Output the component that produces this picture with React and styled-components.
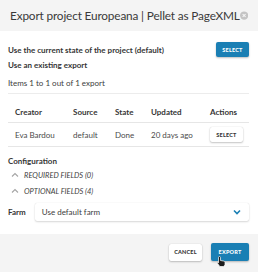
import React from 'react';
import styled, { createGlobalStyle } from 'styled-components';

const GlobalStyle = createGlobalStyle`
  html, body {
    margin: 0;
    padding: 0;
    background: #ffffff;
  }
  body {
    font-family: Lato, "Open Sans", sans-serif;
    color: #363636;
  }
`;

const Modal = styled.div`
  width: 258px;
  height: 272px;
  display: flex;
  flex-direction: column;
  background: #fff;
  overflow: hidden;
  position: relative;
`;

const Header = styled.header`
  height: 31px;
  flex: none;
  display: flex;
  align-items: center;
  justify-content: space-between;
  padding: 0 10px 0 10px;
  background: #f4f4f4;
  box-sizing: border-box;
`;

const Title = styled.h1`
  margin: 0;
  font-size: 11.8px;
  font-weight: 400;
  color: #3a3a3a;
  white-space: nowrap;
  letter-spacing: -0.15px;
`;

const Body = styled.section`
  flex: 1;
  padding: 0 9px 0 8px;
  display: flex;
  flex-direction: column;
`;

const OptionRow = styled.div`
  display: flex;
  align-items: center;
  justify-content: space-between;
  height: ${({ h }) => h}px;
  margin-top: ${({ mt }) => mt || 0}px;
`;

const Strong = styled.span`
  font-size: 8px;
  font-weight: 700;
  color: #363636;
`;

const Text = styled.span`
  font-size: 8px;
  color: #3d3d3d;
`;

const Button = styled.button`
  font-family: Lato, "Open Sans", sans-serif;
  font-size: 5.5px;
  font-weight: 900;
  letter-spacing: 0.2px;
  text-transform: uppercase;
  border: none;
  border-radius: 2px;
  padding: 0;
  width: ${({ w }) => w}px;
  height: ${({ h }) => h || 15}px;
  cursor: pointer;
  color: ${({ primary }) => (primary ? '#ffffff' : '#363636')};
  background: ${({ primary }) => (primary ? '#1a7fb4' : '#ffffff')};
  box-shadow: ${({ primary }) =>
    primary ? '0 1px 2px rgba(0,0,0,0.25)' : '0 1px 2px rgba(0,0,0,0.22), 0 0 1px rgba(0,0,0,0.2)'};
`;

const Divider = styled.div`
  height: 1px;
  background: #ececec;
`;

const Table = styled.table`
  width: 100%;
  border-collapse: collapse;
  margin-top: 7px;
  font-size: 8px;

  th {
    text-align: left;
    font-weight: 700;
    height: 21px;
    border-bottom: 1px solid #e6e6e6;
    padding: 0;
    color: #363636;
  }

  td {
    height: 23px;
    border-bottom: 1px solid #e6e6e6;
    padding: 0;
    color: #4a4a4a;
  }

  th:first-child,
  td:first-child {
    padding-left: 7px;
  }
`;

const Section = styled.div`
  margin-top: 8px;
  display: flex;
  flex-direction: column;
`;

const Toggle = styled.div`
  display: flex;
  align-items: center;
  gap: 5px;
  height: 16px;
  padding-left: 3px;
  font-size: 7.5px;
  font-style: italic;
  text-transform: uppercase;
  color: #3d3d3d;
`;

const FarmRow = styled.div`
  display: flex;
  align-items: center;
  gap: 9px;
  margin-top: 4px;
`;

const Select = styled.div`
  flex: 1;
  height: 18px;
  display: flex;
  align-items: center;
  justify-content: space-between;
  padding: 0 8px 0 7px;
  font-size: 8px;
  color: #3d3d3d;
  border-radius: 2px;
  box-shadow: 0 1px 2px rgba(0,0,0,0.15), 0 0 1px rgba(0,0,0,0.15);
`;

const Footer = styled.footer`
  height: 38px;
  flex: none;
  display: flex;
  align-items: center;
  justify-content: flex-end;
  gap: 9px;
  padding: 0 9px 2px;
  background: #f4f4f4;
  box-sizing: border-box;
`;

const Cursor = styled.svg`
  position: absolute;
  left: 217px;
  top: 256px;
`;

const CloseIcon = () => (
  <svg width="9" height="9" viewBox="0 0 10 10">
    <circle cx="5" cy="5" r="5" fill="#c4c4c4" />
    <path d="M3.2 3.2 L6.8 6.8 M6.8 3.2 L3.2 6.8" stroke="#f4f4f4" strokeWidth="1.3" />
  </svg>
);

const ChevronUp = () => (
  <svg width="8" height="6" viewBox="0 0 8 6">
    <path d="M1 4.5 L4 1.5 L7 4.5" fill="none" stroke="#a5a5a5" strokeWidth="1.1" />
  </svg>
);

const ChevronDown = () => (
  <svg width="8" height="6" viewBox="0 0 8 6">
    <path d="M1 1.5 L4 4.5 L7 1.5" fill="none" stroke="#1a7fb4" strokeWidth="1.6" />
  </svg>
);

const rows = [{ creator: 'Eva Bardou', source: 'default', state: 'Done', updated: '20 days ago' }];

export default function App() {
  return (
    <>
      <GlobalStyle />
      <Modal>
        <Header>
          <Title>Export project Europeana | Pellet as PageXML</Title>
          <CloseIcon />
        </Header>
        <Body>
          <OptionRow h={15} mt={11}>
            <Strong>Use the current state of the project (default)</Strong>
            <Button primary w={33}>Select</Button>
          </OptionRow>
          <OptionRow h={16}>
            <Strong>Use an existing export</Strong>
          </OptionRow>
          <OptionRow h={20}>
            <Text>Items 1 to 1 out of 1 export</Text>
          </OptionRow>
          <Divider />
          <Table>
            <thead>
              <tr>
                <th style={{ width: 58 }}>Creator</th>
                <th style={{ width: 42 }}>Source</th>
                <th style={{ width: 36 }}>State</th>
                <th style={{ width: 59 }}>Updated</th>
                <th>Actions</th>
              </tr>
            </thead>
            <tbody>
              {rows.map((r) => (
                <tr key={r.creator}>
                  <td>{r.creator}</td>
                  <td>{r.source}</td>
                  <td>{r.state}</td>
                  <td>{r.updated}</td>
                  <td>
                    <Button w={33}>Select</Button>
                  </td>
                </tr>
              ))}
            </tbody>
          </Table>
          <Section>
            <OptionRow h={12}>
              <Strong>Configuration</Strong>
            </OptionRow>
            <Toggle>
              <ChevronUp />
              Required fields (0)
            </Toggle>
            <Toggle>
              <ChevronUp />
              Optional fields (4)
            </Toggle>
          </Section>
          <FarmRow>
            <Strong>Farm</Strong>
            <Select>
              Use default farm
              <ChevronDown />
            </Select>
          </FarmRow>
        </Body>
        <Footer>
          <Button w={33} h={17}>Cancel</Button>
          <Button primary w={38} h={18}>Export</Button>
        </Footer>
        <Cursor width="9" height="11" viewBox="0 0 9 11">
          <path
            d="M2.5 0.5 C3.2 0.5 3.5 1 3.5 1.5 L3.5 4.5 L6.5 5 C7.5 5.2 8 5.7 8 6.5 L8 8.5 L6.8 10.5 L2.8 10.5 L0.6 7.5 C0.3 7 0.6 6.3 1.2 6.5 L1.5 6.8 L1.5 1.5 C1.5 1 1.8 0.5 2.5 0.5 Z"
            fill="#1c1c1c"
            stroke="#ffffff"
            strokeWidth="0.7"
          />
        </Cursor>
      </Modal>
    </>
  );
}
